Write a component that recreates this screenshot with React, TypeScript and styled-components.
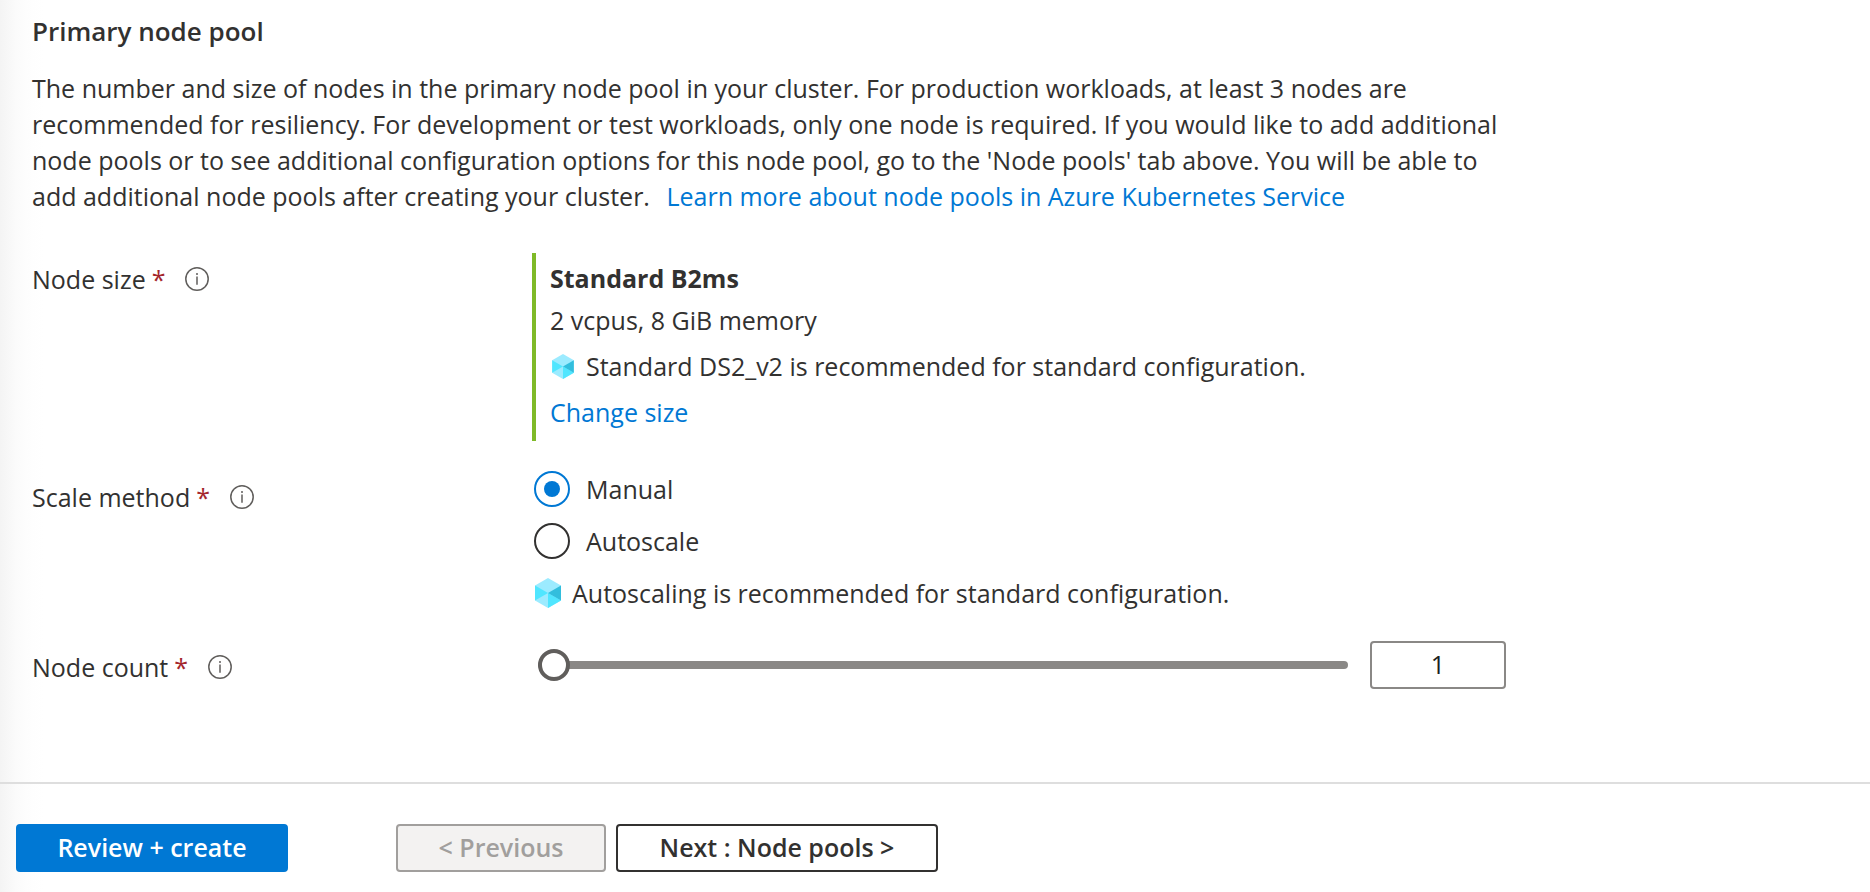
import React, { useState } from "react";
import styled, { createGlobalStyle, css } from "styled-components";

const GlobalStyle = createGlobalStyle`
  *, *::before, *::after { box-sizing: border-box; }
  body {
    margin: 0;
    background: #fff;
    color: #323130;
    font-family: "Segoe UI", "Open Sans", sans-serif;
    font-size: 25px;
    line-height: 36px;
  }
  button, input { font: inherit; color: inherit; margin: 0; }
`;

const Page = styled.main`
  min-height: 100vh;
  display: flex;
  flex-direction: column;
  background: linear-gradient(to right, #f4f4f4 0, #fbfbfb 16px, #fefefe 32px, #fff 44px);
`;

const Content = styled.section`
  flex: 1;
  max-width: 1538px;
  padding: 13px 32px 48px;
`;

const Title = styled.h2`
  margin: 0 0 21px;
  font-size: 26px;
  font-weight: 600;
`;

const Description = styled.p`
  margin: 0 0 39px;
`;

const Link = styled.a`
  color: #0078d4;
  text-decoration: none;
  &:hover { text-decoration: underline; }
`;

const MoreLink = styled(Link)`
  margin-left: 10px;
`;

const Form = styled.form`
  display: flex;
  flex-direction: column;
  gap: 30px;
`;

const Row = styled.div`
  display: grid;
  grid-template-columns: 500px minmax(0, 1fr);
`;

const LabelCell = styled.div`
  display: flex;
  align-items: center;
  align-self: start;
  padding-top: 8px;
`;

const Required = styled.span`
  margin-left: 6px;
  color: #a4262c;
`;

const InfoButton = styled.button`
  display: flex;
  margin-left: 20px;
  padding: 0;
  border: 0;
  background: none;
  color: #605e5c;
`;

const SizeCard = styled.div`
  display: flex;
  flex-direction: column;
  align-items: flex-start;
  gap: 10px;
  padding: 7px 0 11px 14px;
  border-left: 4px solid #7fba28;
`;

const SizeSummary = styled.div`
  display: flex;
  flex-direction: column;
  gap: 6px;
`;

const Hint = styled.div`
  display: flex;
  align-items: center;
  gap: 10px;
`;

const Choices = styled.div`
  display: flex;
  flex-direction: column;
  gap: 16px;
  padding-left: 2px;
`;

const Choice = styled.label`
  display: flex;
  align-items: center;
  gap: 16px;
`;

const Radio = styled.input`
  appearance: none;
  display: grid;
  place-items: center;
  flex: none;
  width: 36px;
  height: 36px;
  border: 2px solid #323130;
  border-radius: 50%;
  background: #fff;

  &:checked { border-color: #0078d4; }
  &:checked::before {
    content: "";
    width: 16px;
    height: 16px;
    border-radius: 50%;
    background: #0078d4;
  }
`;

const SliderCell = styled.div`
  display: flex;
  align-items: center;
  gap: 22px;
  padding-left: 6px;
`;

const Slider = styled.input`
  appearance: none;
  flex: 1;
  min-width: 0;
  height: 32px;
  background: none;

  &::-webkit-slider-runnable-track {
    height: 8px;
    border-radius: 4px;
    background: #8a8886;
  }
  &::-webkit-slider-thumb {
    appearance: none;
    width: 32px;
    height: 32px;
    margin-top: -12px;
    border: 4px solid #605e5c;
    border-radius: 50%;
    background: #fff;
  }
`;

const CountInput = styled.input`
  width: 136px;
  height: 48px;
  padding: 0 8px 2px;
  border: 2px solid #8a8886;
  border-radius: 4px;
  background: #fff;
  color: #201f1e;
  text-align: center;
`;

const Footer = styled.footer`
  display: flex;
  gap: 10px;
  padding: 40px 16px 20px;
  border-top: 2px solid #dedede;
`;

const variants = {
  primary: css`
    width: 272px;
    margin-right: 98px;
    border-color: #0078d4;
    background: #0078d4;
    color: #fff;
  `,
  disabled: css`
    width: 210px;
    border-color: #a19f9d;
    background: #f3f2f1;
    color: #a19f9d;
  `,
  outline: css`
    width: 322px;
    border-color: #323130;
    background: #fff;
  `,
};

const Button = styled.button<{ $variant: keyof typeof variants }>`
  height: 48px;
  padding: 0 0 2px;
  border: 2px solid;
  border-radius: 4px;
  font-weight: 600;
  white-space: nowrap;
  ${(p) => variants[p.$variant]}
`;

function Cube({ width, height }: { width: number; height: number }) {
  return (
    <svg width={width} height={height} viewBox="0 0 26 30" aria-hidden="true">
      <path d="M13 0 26 7.5v15L13 30 0 22.5v-15Z" fill="#9cebff" />
      <path d="M0 7.5 13 15 0 22.5Z" fill="#50e6ff" />
      <path d="M13 15 26 22.5 13 30Z" fill="#50e6ff" />
      <path d="M26 7.5v15L13 15Z" fill="#32bedd" />
    </svg>
  );
}

function FieldLabel({ text, htmlFor, id }: { text: string; htmlFor?: string; id?: string }) {
  return (
    <LabelCell>
      <label htmlFor={htmlFor} id={id}>
        {text}
        <Required>*</Required>
      </label>
      <InfoButton type="button" aria-label={`About ${text.toLowerCase()}`}>
        <svg width="24" height="24" viewBox="0 0 24 24" fill="none" stroke="currentColor" aria-hidden="true">
          <circle cx="12" cy="12" r="11.2" strokeWidth="1.5" />
          <path d="M12 9.5v8.3M12 6v2" strokeWidth="1.5" />
        </svg>
      </InfoButton>
    </LabelCell>
  );
}

export default function App() {
  const [method, setMethod] = useState("Manual");
  const [count, setCount] = useState("1");

  return (
    <>
      <GlobalStyle />
      <Page>
        <Content>
          <Title>Primary node pool</Title>
          <Description>
            The number and size of nodes in the primary node pool in your cluster. For production workloads, at least 3
            nodes are recommended for resiliency. For development or test workloads, only one node is required. If you
            would like to add additional node pools or to see additional configuration options for this node pool, go to
            the 'Node pools' tab above. You will be able to add additional node pools after creating your cluster.{" "}
            <MoreLink href="#node-pools">Learn more about node pools in Azure Kubernetes Service</MoreLink>
          </Description>
          <Form id="pool" onSubmit={(e) => e.preventDefault()}>
            <Row>
              <FieldLabel text="Node size" htmlFor="size" />
              <SizeCard>
                <SizeSummary>
                  <output id="size">
                    <strong>Standard B2ms</strong>
                  </output>
                  <span>2 vcpus, 8 GiB memory</span>
                </SizeSummary>
                <Hint>
                  <Cube width={26} height={25} />
                  Standard DS2_v2 is recommended for standard configuration.
                </Hint>
                <Link href="#change-size">Change size</Link>
              </SizeCard>
            </Row>
            <Row role="radiogroup" aria-labelledby="method">
              <FieldLabel text="Scale method" id="method" />
              <Choices>
                {["Manual", "Autoscale"].map((name) => (
                  <Choice key={name}>
                    <Radio
                      type="radio"
                      name="method"
                      value={name}
                      checked={method === name}
                      onChange={() => setMethod(name)}
                    />
                    {name}
                  </Choice>
                ))}
                <Hint>
                  <Cube width={28} height={30} />
                  Autoscaling is recommended for standard configuration.
                </Hint>
              </Choices>
            </Row>
            <Row>
              <FieldLabel text="Node count" htmlFor="count" />
              <SliderCell>
                <Slider
                  type="range"
                  min={1}
                  max={100}
                  value={count}
                  aria-label="Node count slider"
                  onChange={(e) => setCount(e.target.value)}
                />
                <CountInput id="count" type="text" value={count} onChange={(e) => setCount(e.target.value)} />
              </SliderCell>
            </Row>
          </Form>
        </Content>
        <Footer>
          <Button $variant="primary" type="submit" form="pool">
            Review + create
          </Button>
          <Button $variant="disabled" type="button" disabled>
            &lt; Previous
          </Button>
          <Button $variant="outline" type="button">
            Next : Node pools &gt;
          </Button>
        </Footer>
      </Page>
    </>
  );
}
